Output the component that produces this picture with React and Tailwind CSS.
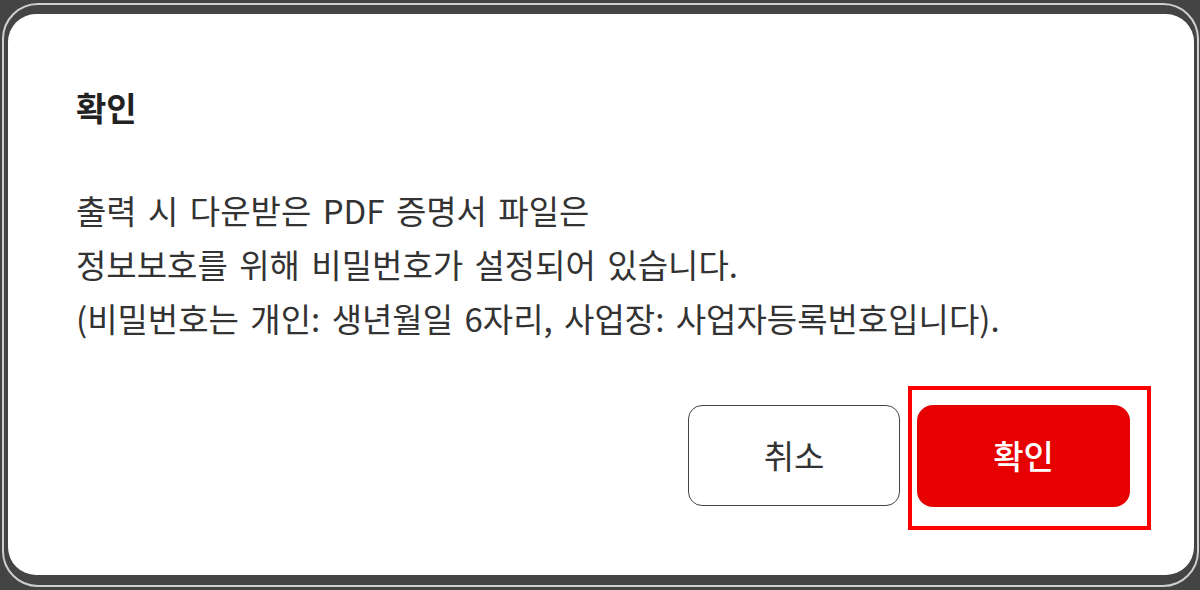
const font = { fontFamily: '"Noto Sans CJK KR", "Noto Sans", sans-serif' };

const App = () => {
  return (
    <div className="h-[590px] w-[1200px] overflow-hidden bg-[#444444] pt-[3px] pb-[3px] pl-[2px] pr-[1px] flex flex-col" style={font}>
      <div className="flex-1 flex flex-col rounded-[36px] border-2 border-[#cfcfcf] pt-[9px] pb-[10px] pl-[4px] pr-[3px]">
        <div className="flex-1 flex flex-col rounded-[28px] bg-white pl-[68px] pr-[64px]">
          <h2 className="mt-[73px] text-[33px] leading-[40px] font-bold text-[#222222]">확인</h2>

          <div className="mt-[56px] text-[33px] leading-[54px] text-[#333333] [word-spacing:4px]">
            <p>출력 시 다운받은 PDF 증명서 파일은</p>
            <p>정보보호를 위해 비밀번호가 설정되어 있습니다.</p>
            <p>(비밀번호는 개인: 생년월일 6자리, 사업장: 사업자등록번호입니다).</p>
          </div>

          <div className="mt-auto mb-[68px] flex justify-end gap-[17px]">
            <button className="h-[101px] w-[212px] rounded-[14px] border-[1.5px] border-[#444444] bg-white text-[33px] text-[#333333]">
              취소
            </button>
            <div className="relative">
              <button className="h-[102px] w-[213px] rounded-[16px] bg-[#e60000] text-[33px] font-medium text-white">
                확인
              </button>
              <div className="pointer-events-none absolute -left-[9px] -top-[19px] -right-[21px] -bottom-[23px] border-[4px] border-[#ff0000]" />
            </div>
          </div>
        </div>
      </div>
    </div>
  );
};

export default App;
